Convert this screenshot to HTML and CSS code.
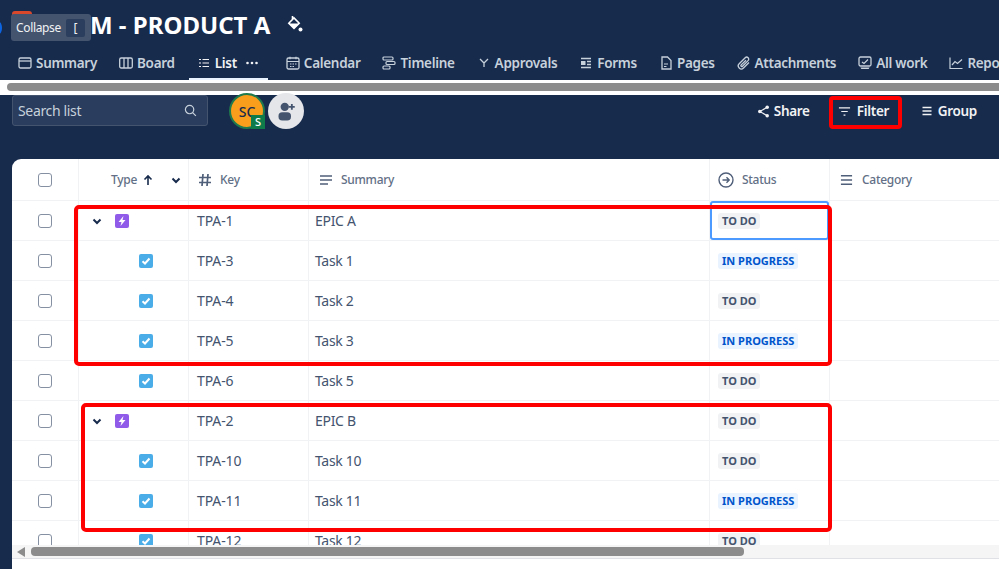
FILE: index.html
```html
<!DOCTYPE html>
<html lang="en">
<head>
<meta charset="utf-8">
<title>PRODUCT A - List</title>
<link rel="stylesheet" href="styles.css">
</head>
<body>
<div class="page">
  <header class="titlebar">
    <span class="project-icon"></span>
    <h1 class="title">M - PRODUCT A</h1>
    <svg class="paint" viewBox="0 0 16 18"><path d="M5.500 1v3M1.800 8.200L7 3l5.200 5.200L7 13.400z" fill="none" stroke="#fff" stroke-width="1.600"/><path d="M2 8.500h10L7 13.500z" fill="#fff"/><circle cx="13.500" cy="14.500" r="2" fill="#fff"/></svg>
  </header>
  <span class="edge-dot"></span>
  <div class="tooltip">Collapse <kbd class="key">[</kbd></div>

  <nav class="tabs">
    <a class="tab"><svg viewBox="0 0 14 14"><rect x="1" y="2" width="12" height="10" rx="1.500" fill="none" stroke="currentColor" stroke-width="1.300"/><path d="M1 5h12" stroke="currentColor" stroke-width="1.300"/></svg>Summary</a>
    <a class="tab"><svg viewBox="0 0 14 14"><rect x=".7" y="2" width="12.600" height="10" rx="1.500" fill="none" stroke="currentColor" stroke-width="1.300"/><path d="M5 2v10M9 2v10" stroke="currentColor" stroke-width="1.300"/></svg>Board</a>
    <a class="tab active"><svg class="small" viewBox="0 0 12 12"><path d="M1 2.500h2M4.500 2.500h6.500M1 6h2M4.500 6h6.500M1 9.500h2M4.500 9.500h6.500" stroke="currentColor" stroke-width="1.200"/></svg>List<svg class="dots" viewBox="0 0 12 4"><circle cx="1.500" cy="2" r="1.300" fill="currentColor"/><circle cx="6" cy="2" r="1.300" fill="currentColor"/><circle cx="10.500" cy="2" r="1.300" fill="currentColor"/></svg></a>
    <a class="tab"><svg viewBox="0 0 14 14"><rect x="1" y="2" width="12" height="11" rx="1.500" fill="none" stroke="currentColor" stroke-width="1.300"/><path d="M1 5.500h12M4 .8v2.400M10 .8v2.400M4 8h1.500M6.500 8h1.500M9 8h1.500M4 10.500h1.500M6.500 10.500h1.500" stroke="currentColor" stroke-width="1.200"/></svg>Calendar</a>
    <a class="tab"><svg viewBox="0 0 14 14"><g fill="none" stroke="currentColor" stroke-width="1.200"><rect x="1" y="1" width="10" height="3" rx="1"/><rect x="4" y="5.500" width="9" height="3" rx="1"/><rect x="1" y="10" width="7" height="3" rx="1"/></g></svg>Timeline</a>
    <a class="tab"><svg class="small" viewBox="0 0 12 12"><path d="M2 2l4 4 4-4M6 6v4" fill="none" stroke="currentColor" stroke-width="1.300"/></svg>Approvals</a>
    <a class="tab"><svg viewBox="0 0 14 14"><path d="M2 2.500h10M2 11.500h10M8 5.500h4M8 8.500h4" stroke="currentColor" stroke-width="1.300"/><rect x="2" y="5" width="4.500" height="4" fill="currentColor"/></svg>Forms</a>
    <a class="tab"><svg viewBox="0 0 14 14"><path d="M3 1h5.500L12 4.500V13H3z" fill="none" stroke="currentColor" stroke-width="1.300"/><path d="M5 8h4M5 10.500h2.500" stroke="currentColor" stroke-width="1.100"/></svg>Pages</a>
    <a class="tab"><svg viewBox="0 0 14 14"><path d="M12 6.500l-5.500 5.500a3 3 0 0 1-4.300-4.300l6-6a2 2 0 0 1 2.900 2.900L5.500 10.200a.9.9 0 0 1-1.300-1.300L9 4.200" fill="none" stroke="currentColor" stroke-width="1.300"/></svg>Attachments</a>
    <a class="tab"><svg viewBox="0 0 14 14"><rect x="1" y="1" width="12" height="9" rx="1.500" fill="none" stroke="currentColor" stroke-width="1.300"/><path d="M4 6l2 1.500L10 3.500" fill="none" stroke="currentColor" stroke-width="1.200"/><path d="M2.500 11.500h9l-.8 1.500H3.300z" fill="currentColor"/></svg>All work</a>
    <a class="tab"><svg viewBox="0 0 14 14"><path d="M1 1.500V12.500H13.500" fill="none" stroke="currentColor" stroke-width="1.200"/><path d="M3 9l3-3.500 2.500 2L13 3.500" fill="none" stroke="currentColor" stroke-width="1.200"/></svg>Reports</a>
  </nav>

  <div class="hscroll-top"><span class="thumb-top"></span></div>

  <section class="toolbar">
    <label class="search">
      <span class="search-text">Search list</span>
      <svg viewBox="0 0 14 14"><circle cx="6" cy="6" r="4.500" fill="none" stroke="currentColor" stroke-width="1.300"/><path d="M9.300 9.300l3.500 3.500" stroke="currentColor" stroke-width="1.300"/></svg>
    </label>
    <div class="avatars">
      <span class="avatar">SC<span class="avatar-badge">S</span></span>
      <span class="add-user"><svg viewBox="0 0 24 24"><circle cx="10.500" cy="7" r="5" fill="#44546f"/><rect x="3" y="13.500" width="15" height="10" rx="4.500" fill="#44546f"/><path d="M19 3.500v7M15.500 7h7" stroke="#44546f" stroke-width="2.200"/></svg></span>
    </div>
    <div class="actions">
      <button class="action share"><svg viewBox="0 0 14 14"><path d="M11 2.500L3 7l8 4.500" fill="none" stroke="currentColor" stroke-width="1.300"/><circle cx="11" cy="2.500" r="1.900" fill="currentColor"/><circle cx="3" cy="7" r="1.900" fill="currentColor"/><circle cx="11" cy="11.500" r="1.900" fill="currentColor"/></svg>Share</button>
      <button class="action filter"><svg viewBox="0 0 14 14"><path d="M1 3h12M3.500 7h7M6 11h2" stroke="currentColor" stroke-width="1.300"/></svg>Filter</button>
      <button class="action group"><svg class="small" viewBox="0 0 12 12"><path d="M1.500 2.500h9M1.500 6h9M1.500 9.500h9" stroke="currentColor" stroke-width="1.300"/></svg>Group</button>
    </div>
  </section>

  <main class="board">
    <div class="table-clip">
      <div class="row head">
        <div class="cell c-check"><span class="check"></span></div>
        <div class="cell c-type"><span class="type-label">Type</span><svg class="sort" viewBox="0 0 12 12"><path d="M6 11V2M2.500 5.500L6 2l3.500 3.500" fill="none" stroke="#172b4d" stroke-width="1.600"/></svg><svg class="chev head-chev" viewBox="0 0 12 12"><path d="M2.500 4.500L6 8l3.500-3.500" fill="none" stroke="#172b4d" stroke-width="2"/></svg></div>
        <div class="cell c-key"><svg class="col-ico" viewBox="0 0 14 14"><path d="M5 1L4 13M10 1L9 13M1 4.500h12M1 9.500h12" stroke="#505f79" stroke-width="1.700"/></svg>Key</div>
        <div class="cell c-sum"><svg class="col-ico" viewBox="0 0 14 14"><path d="M1 3h12M1 7h12M1 11h8" stroke="#505f79" stroke-width="1.600"/></svg>Summary</div>
        <div class="cell c-status"><svg class="col-ico wide" viewBox="0 0 16 16"><circle cx="8" cy="8" r="7" fill="none" stroke="#505f79" stroke-width="1.400"/><path d="M4.500 8h6.500M8.500 5.200L11.200 8 8.500 10.800" fill="none" stroke="#505f79" stroke-width="1.400"/></svg>Status</div>
        <div class="cell c-cat"><svg class="col-ico" viewBox="0 0 14 14"><path d="M1 2.500h12M1 7h12M1 11.500h12" stroke="#505f79" stroke-width="1.600"/></svg>Category</div>
      </div>

      <div class="row">
        <div class="cell c-check"><span class="check"></span></div>
        <div class="cell c-type parent"><svg class="chev" viewBox="0 0 12 12"><path d="M2.500 4.500L6 8l3.500-3.500" fill="none" stroke="#172b4d" stroke-width="2"/></svg><span class="epic"><svg viewBox="0 0 14 14"><path d="M8.500 2L3.500 8h3L5.500 12l5-6h-3z" fill="#fff"/></svg></span></div>
        <div class="cell c-key text">TPA-1</div>
        <div class="cell c-sum text">EPIC A</div>
        <div class="cell c-status focused"><span class="lozenge todo">TO DO</span></div>
        <div class="cell c-cat"></div>
      </div>
      <div class="row">
        <div class="cell c-check"><span class="check"></span></div>
        <div class="cell c-type child"><span class="task"><svg viewBox="0 0 14 14"><path d="M3.500 7.200L6 9.500l4.500-5" fill="none" stroke="#fff" stroke-width="2"/></svg></span></div>
        <div class="cell c-key text">TPA-3</div>
        <div class="cell c-sum text">Task 1</div>
        <div class="cell c-status"><span class="lozenge progress">IN PROGRESS</span></div>
        <div class="cell c-cat"></div>
      </div>
      <div class="row">
        <div class="cell c-check"><span class="check"></span></div>
        <div class="cell c-type child"><span class="task"><svg viewBox="0 0 14 14"><path d="M3.500 7.200L6 9.500l4.500-5" fill="none" stroke="#fff" stroke-width="2"/></svg></span></div>
        <div class="cell c-key text">TPA-4</div>
        <div class="cell c-sum text">Task 2</div>
        <div class="cell c-status"><span class="lozenge todo">TO DO</span></div>
        <div class="cell c-cat"></div>
      </div>
      <div class="row">
        <div class="cell c-check"><span class="check"></span></div>
        <div class="cell c-type child"><span class="task"><svg viewBox="0 0 14 14"><path d="M3.500 7.200L6 9.500l4.500-5" fill="none" stroke="#fff" stroke-width="2"/></svg></span></div>
        <div class="cell c-key text">TPA-5</div>
        <div class="cell c-sum text">Task 3</div>
        <div class="cell c-status"><span class="lozenge progress">IN PROGRESS</span></div>
        <div class="cell c-cat"></div>
      </div>
      <div class="row">
        <div class="cell c-check"><span class="check"></span></div>
        <div class="cell c-type child"><span class="task"><svg viewBox="0 0 14 14"><path d="M3.500 7.200L6 9.500l4.500-5" fill="none" stroke="#fff" stroke-width="2"/></svg></span></div>
        <div class="cell c-key text">TPA-6</div>
        <div class="cell c-sum text">Task 5</div>
        <div class="cell c-status"><span class="lozenge todo">TO DO</span></div>
        <div class="cell c-cat"></div>
      </div>
      <div class="row">
        <div class="cell c-check"><span class="check"></span></div>
        <div class="cell c-type parent"><svg class="chev" viewBox="0 0 12 12"><path d="M2.500 4.500L6 8l3.500-3.500" fill="none" stroke="#172b4d" stroke-width="2"/></svg><span class="epic"><svg viewBox="0 0 14 14"><path d="M8.500 2L3.500 8h3L5.500 12l5-6h-3z" fill="#fff"/></svg></span></div>
        <div class="cell c-key text">TPA-2</div>
        <div class="cell c-sum text">EPIC B</div>
        <div class="cell c-status"><span class="lozenge todo">TO DO</span></div>
        <div class="cell c-cat"></div>
      </div>
      <div class="row">
        <div class="cell c-check"><span class="check"></span></div>
        <div class="cell c-type child"><span class="task"><svg viewBox="0 0 14 14"><path d="M3.500 7.200L6 9.500l4.500-5" fill="none" stroke="#fff" stroke-width="2"/></svg></span></div>
        <div class="cell c-key text">TPA-10</div>
        <div class="cell c-sum text">Task 10</div>
        <div class="cell c-status"><span class="lozenge todo">TO DO</span></div>
        <div class="cell c-cat"></div>
      </div>
      <div class="row">
        <div class="cell c-check"><span class="check"></span></div>
        <div class="cell c-type child"><span class="task"><svg viewBox="0 0 14 14"><path d="M3.500 7.200L6 9.500l4.500-5" fill="none" stroke="#fff" stroke-width="2"/></svg></span></div>
        <div class="cell c-key text">TPA-11</div>
        <div class="cell c-sum text">Task 11</div>
        <div class="cell c-status"><span class="lozenge progress">IN PROGRESS</span></div>
        <div class="cell c-cat"></div>
      </div>
      <div class="row">
        <div class="cell c-check"><span class="check"></span></div>
        <div class="cell c-type child"><span class="task"><svg viewBox="0 0 14 14"><path d="M3.500 7.200L6 9.500l4.500-5" fill="none" stroke="#fff" stroke-width="2"/></svg></span></div>
        <div class="cell c-key text">TPA-12</div>
        <div class="cell c-sum text">Task 12</div>
        <div class="cell c-status"><span class="lozenge todo">TO DO</span></div>
        <div class="cell c-cat"></div>
      </div>
    </div>
    <div class="hscroll-bottom">
      <span class="arrow-left"></span>
      <span class="thumb-bottom"></span>
    </div>
    <div class="board-foot"></div>
  </main>

  <div class="redbox box-a"></div>
  <div class="redbox box-b"></div>
</div>
</body>
</html>
```

FILE: styles.css
```css
* { box-sizing: border-box; }
html, body { margin: 0; padding: 0; }
body {
  background: #172b4d;
  font-family: "Noto Sans", "Open Sans", sans-serif;
  overflow: hidden;
}
.page {
  position: relative;
  width: 999px;
  height: 569px;
  overflow: hidden;
  display: flex;
  flex-direction: column;
  background: #172b4d;
}
svg { display: block; flex: none; }

/* title */
.titlebar {
  height: 50px;
  flex: none;
  display: flex;
  align-items: center;
  padding-left: 90px;
  position: relative;
}
.project-icon {
  position: absolute;
  left: 12px;
  top: 11px;
  width: 20px;
  height: 20px;
  border-radius: 3px;
  background: #d9482b;
}
.title {
  margin: 0 0 2px;
  color: #fff;
  font-size: 24px;
  font-weight: 700;
  white-space: nowrap;
}
.paint { width: 16px; height: 18px; margin: -2px 0 0 17px; }
.edge-dot {
  position: absolute;
  left: -4px;
  top: 22px;
  width: 6px;
  height: 12px;
  border-radius: 50%;
  background: #0c66e4;
}
.tooltip {
  position: absolute;
  left: 11px;
  top: 14px;
  width: 80px;
  height: 27px;
  border-radius: 3px;
  background: #44546f;
  color: #f1f2f4;
  font-size: 12px;
  letter-spacing: -.35px;
  display: flex;
  align-items: center;
  padding-left: 5px;
  gap: 5px;
}
.key {
  width: 19px;
  height: 18px;
  background: #2c3e5d;
  border-radius: 2px;
  font: inherit;
  text-align: center;
  line-height: 18px;
}

/* tabs */
.tabs {
  height: 30px;
  flex: none;
  display: flex;
  align-items: flex-start;
  gap: 22px;
  padding: 3px 0 0 18px;
  white-space: nowrap;
}
.tab {
  display: flex;
  align-items: center;
  gap: 4px;
  height: 19px;
  color: #c7d1db;
  font-size: 13.500px;
  letter-spacing: -.3px;
  font-weight: 600;
  flex: none;
  position: relative;
}
.tab svg { width: 14px; height: 14px; }
.tab svg.small { width: 12px; height: 12px; margin: 0 1px; }
.tab.active { color: #f1f2f4; }
.tab.active::after {
  content: "";
  position: absolute;
  left: -8px;
  right: -4px;
  top: 25px;
  height: 2px;
  background: #e9f2ff;
}
.tab svg.dots { width: 12px; height: 4px; margin: 0 6px 0 5px; }

/* top scroll strip */
.hscroll-top {
  height: 15px;
  flex: none;
  background: #fff;
  padding: 3px 0 0 7px;
}
.thumb-top {
  display: block;
  height: 8px;
  background: #8c8c8c;
  border-radius: 4px 0 0 4px;
}

/* toolbar */
.toolbar {
  height: 64px;
  flex: none;
  display: flex;
  align-items: flex-start;
  padding: 0 22px 0 12px;
}
.search {
  width: 196px;
  height: 31px;
  border: 1px solid #44546f;
  border-radius: 3px;
  background: #2a3d5e;
  color: #c7d1db;
  display: flex;
  align-items: center;
  justify-content: space-between;
  padding: 0 10px 0 5px;
  font-size: 14px;
  letter-spacing: -.35px;
}
.search svg { width: 13px; height: 13px; }
.avatars { display: flex; margin-left: 21px; gap: 3px; margin-top: -2px; }
.avatar {
  position: relative;
  width: 36px;
  height: 36px;
  border-radius: 50%;
  background: #f99d1c;
  border: 2px solid #1f7a4d;
  color: #172b4d;
  font-size: 14px;
  font-weight: 500;
  display: flex;
  align-items: center;
  justify-content: center;
}
.avatar-badge {
  position: absolute;
  right: -2px;
  bottom: -2px;
  width: 14px;
  height: 14px;
  background: #0f7b4b;
  color: #fff;
  font-size: 11px;
  line-height: 14px;
  text-align: center;
}
.add-user {
  width: 36px;
  height: 36px;
  border-radius: 50%;
  background: #e4e6ea;
  display: flex;
  align-items: center;
  justify-content: center;
}
.add-user svg { width: 20px; height: 20px; }
.actions { margin-left: auto; display: flex; align-items: center; height: 33px; margin-top: 1px; }
.action {
  background: none;
  border: 0;
  padding: 0 0 3px;
  color: #f1f2f4;
  font: 600 13.500px "Noto Sans", "Open Sans", sans-serif;
  letter-spacing: -.3px;
  display: flex;
  align-items: center;
  height: 33px;
}
.action svg { width: 13px; height: 13px; margin-right: 4px; }
.action svg.small { width: 12px; height: 12px; margin-right: 5px; }
.filter {
  width: 73px;
  margin: 0 19px 0 19px;
  border: 4px solid #f00;
  border-radius: 4px;
  padding: 0 0 3px 5px;
}
.filter svg { margin-right: 6px; }

/* board */
.board {
  flex: 1;
  margin-left: 12px;
  background: #fff;
  border-top-left-radius: 9px;
  display: flex;
  flex-direction: column;
  overflow: hidden;
  min-height: 0;
}
.table-clip { height: 386px; overflow: hidden; flex: none; }
.row {
  height: 40px;
  display: flex;
  border-bottom: 1px solid #f1f2f4;
}
.row.head { height: 42px; }
.cell {
  height: 100%;
  display: flex;
  align-items: center;
  border-right: 1px solid #f1f2f4;
  flex: none;
}
.c-check { width: 67px; justify-content: center; }
.c-type { width: 110px; }
.c-key { width: 120px; padding-left: 8px; }
.c-sum { width: 401px; padding-left: 6px; }
.c-status { width: 120px; padding-left: 8px; position: relative; }
.c-cat { flex: 1; border-right: 0; padding-left: 10px; }
.head .cell { color: #626f86; font-size: 12px; font-weight: 500; letter-spacing: -.3px; }
.head .c-key { padding-left: 9px; }
.head .c-sum { padding-left: 10px; }
.head .c-status { padding-left: 8px; }
.col-ico { width: 14px; height: 14px; margin-right: 8px; }
.col-ico.wide { width: 16px; height: 16px; margin-right: 8px; }
.c-cat .col-ico { width: 13px; margin-right: 9px; }
.text { color: #44546f; font-size: 14px; }
.c-key.text { letter-spacing: -.1px; }
.c-sum.text { letter-spacing: -.3px; }
.check {
  width: 14px;
  height: 14px;
  border: 1px solid #8590a2;
  border-radius: 3px;
  background: #fff;
}
.type-label { margin-left: 32px; }
.sort { width: 12px; height: 12px; margin-left: 5px; }
.chev { width: 12px; height: 12px; }
.head-chev { margin-left: 16px; }
.parent { padding-left: 12px; }
.parent .epic { margin-left: 12px; }
.child { padding-left: 60px; }
.epic, .task {
  width: 14px;
  height: 14px;
  border-radius: 2px;
  display: block;
}
.epic { background: #8f5be8; }
.task { background: #4bade8; }
.lozenge {
  display: block;
  height: 16px;
  padding: 0 4px;
  border-radius: 3px;
  font-size: 11px;
  font-weight: 700;
  line-height: 16px;
  white-space: nowrap;
}
.todo { background: #f1f2f4; color: #44546f; }
.progress { background: #e9f2ff; color: #0055cc; }
.focused::after {
  content: "";
  position: absolute;
  left: 0;
  right: 0;
  top: 0;
  bottom: 0;
  border: 2px solid #4c9aff;
  border-radius: 3px;
}

/* bottom scroll */
.hscroll-bottom {
  height: 14px;
  flex: none;
  display: flex;
  align-items: center;
  background: #f5f5f5;
  border-bottom: 1px solid #dfe1e6;
  padding-left: 5px;
}
.arrow-left {
  width: 0;
  height: 0;
  border-style: solid;
  border-width: 5px 8px 5px 0;
  border-color: transparent #8c8c8c transparent transparent;
}
.thumb-bottom {
  width: 713px;
  height: 9px;
  margin-left: 6px;
  border-radius: 4px;
  background: #8c8c8c;
}
.board-foot { flex: 1; background: #fff; }

/* annotations */
.redbox {
  position: absolute;
  border: 4px solid #f00;
  border-radius: 5px;
  pointer-events: none;
}
.box-a { left: 74px; top: 205px; width: 758px; height: 161px; }
.box-b { left: 81px; top: 403px; width: 751px; height: 129px; }
```
